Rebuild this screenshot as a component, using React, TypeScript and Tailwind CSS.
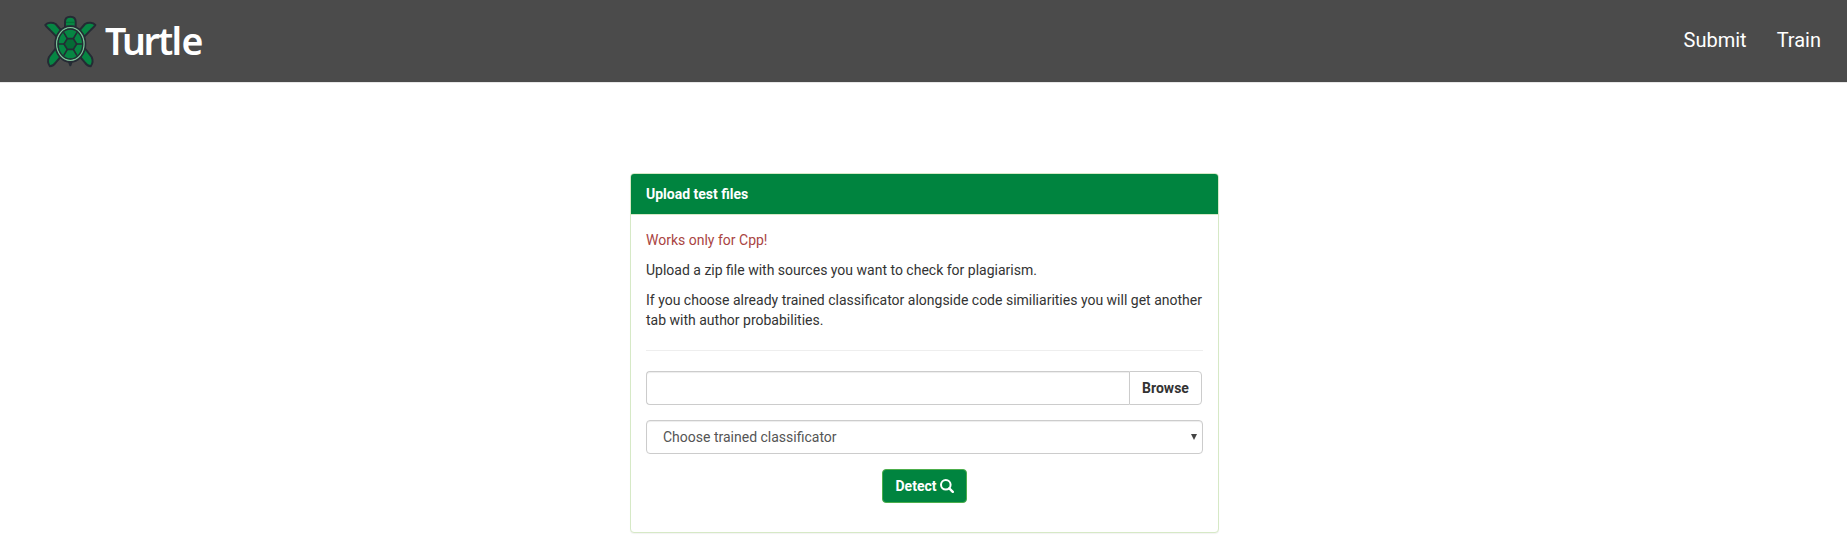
import React from "react";

function TurtleMark() {
  return (
    <svg className="h-[56px] w-[56px]" viewBox="0 0 168 168" aria-hidden="true">
      <g fill="#068643" stroke="#242b34" strokeWidth="6" strokeLinejoin="round" strokeLinecap="round">
        <path d="M69 44V29c0-10 7-15 16-15s16 5 16 15v15z" />
        <path d="M62 60 41 36c-10-6-24-5-31 3 3 6 10 10 15 16l21 22z" />
        <path d="M108 60 129 36c10-6 24-5 31 3-3 6-10 10-15 16l-21 22z" />
        <path d="M42 108 21 135c-4 9-4 19 3 28 8 0 13-5 17-11l22-26z" />
        <path d="M128 108l21 27c4 9 4 19-3 28-8 0-13-5-17-11l-22-26z" />
        <path d="M80 147l5 13 5-13z" fill="#242b34" />
        <ellipse cx="85" cy="96" rx="45" ry="53" strokeWidth="6" />
      </g>
      <path d="M72 31h26" stroke="#056b36" strokeWidth="3" />
      <ellipse cx="85" cy="96" rx="41" ry="49" fill="#068643" stroke="#82bd99" strokeWidth="4" />
      <ellipse cx="85" cy="96" rx="37" ry="45" fill="none" stroke="#242b34" strokeWidth="4" />
      <g fill="none" stroke="#242b34" strokeWidth="5" strokeLinejoin="round">
        <path fill="#056b36" d="M76 80h18l10 16-10 16H76L66 96z" />
        <path d="M76 80 65 61M94 80l11-19M104 96h18M94 112l11 19M76 112l-11 19M66 96H48" />
      </g>
    </svg>
  );
}

function SearchIcon() {
  return (
    <svg className="h-[14px] w-[14px]" viewBox="0 0 14 14" aria-hidden="true">
      <circle cx="5.8" cy="5.8" r="4.8" fill="none" stroke="white" strokeWidth="2" />
      <path d="m9.3 9.3 3.5 3.5" stroke="white" strokeWidth="2.4" strokeLinecap="round" />
    </svg>
  );
}

export default function App() {
  return (
    <div className="min-h-[552px] bg-white font-['Roboto',sans-serif] text-sm leading-5 text-[#333]">
      <nav className="flex h-[83px] items-start justify-between border-b border-[#e7e7e7] bg-[#4b4b4b] pl-[42px]">
        <a href="#" className="flex items-start pt-[12px] text-white">
          <TurtleMark />
          <svg className="h-[66px] w-[110px] overflow-visible" viewBox="0 0 110 66" aria-label="Turtle">
            <text
              x="7 24 45.5 60 73.5 83.4"
              y="43"
              className="fill-white font-['Noto_Sans',sans-serif] text-[37.5px] font-semibold"
            >
              Turtle
            </text>
          </svg>
        </a>
        <div className="flex gap-[30px] pt-[30px] pr-[26px] text-xl leading-5 text-white">
          <a href="#">Submit</a>
          <a href="#">Train</a>
        </div>
      </nav>

      <main className="ml-[630px] mt-[90px] h-[360px] w-[589px] rounded border border-[#d6e9c6] bg-white shadow-[0_1px_1px_rgba(0,0,0,0.05)]">
        <h1 className="h-[41px] rounded-t-[3px] border-b border-[#d6e9c6] bg-[#00843f] px-[15px] py-[10px] font-bold text-white">
          Upload test files
        </h1>
        <div className="p-[15px]">
          <p className="mb-[10px] text-[#a94442]">Works only for Cpp!</p>
          <p className="mb-[10px]">Upload a zip file with sources you want to check for plagiarism.</p>
          <p>
            If you choose already trained classificator alongside code similiarities you will get another tab with
            author probabilities.
          </p>
          <hr className="my-5 border-[#eee]" />
          <div className="mr-px flex h-[34px]">
            <div className="flex-1 rounded-l border border-r-0 border-[#ccc] shadow-[inset_0_1px_1px_rgba(0,0,0,0.075)]" />
            <button className="w-[73px] rounded-r border border-[#ccc] font-bold text-[#333]">Browse</button>
          </div>
          <div className="mt-[15px] flex h-[34px] items-center justify-between rounded border border-[#ccc] pr-[5px] pl-[16px] text-[#555] shadow-[inset_0_1px_1px_rgba(0,0,0,0.075)]">
            <span>Choose trained classificator</span>
            <svg className="h-[6px] w-[6px]" viewBox="0 0 6 6" aria-hidden="true">
              <path d="M0 0h6L3 6z" fill="#444" />
            </svg>
          </div>
          <div className="mt-[15px] flex justify-center">
            <button className="flex h-[34px] w-[85px] items-center justify-center gap-[3px] rounded border border-[#4cae4c] bg-[#00843f] font-bold text-white">
              Detect
              <SearchIcon />
            </button>
          </div>
        </div>
      </main>
    </div>
  );
}
